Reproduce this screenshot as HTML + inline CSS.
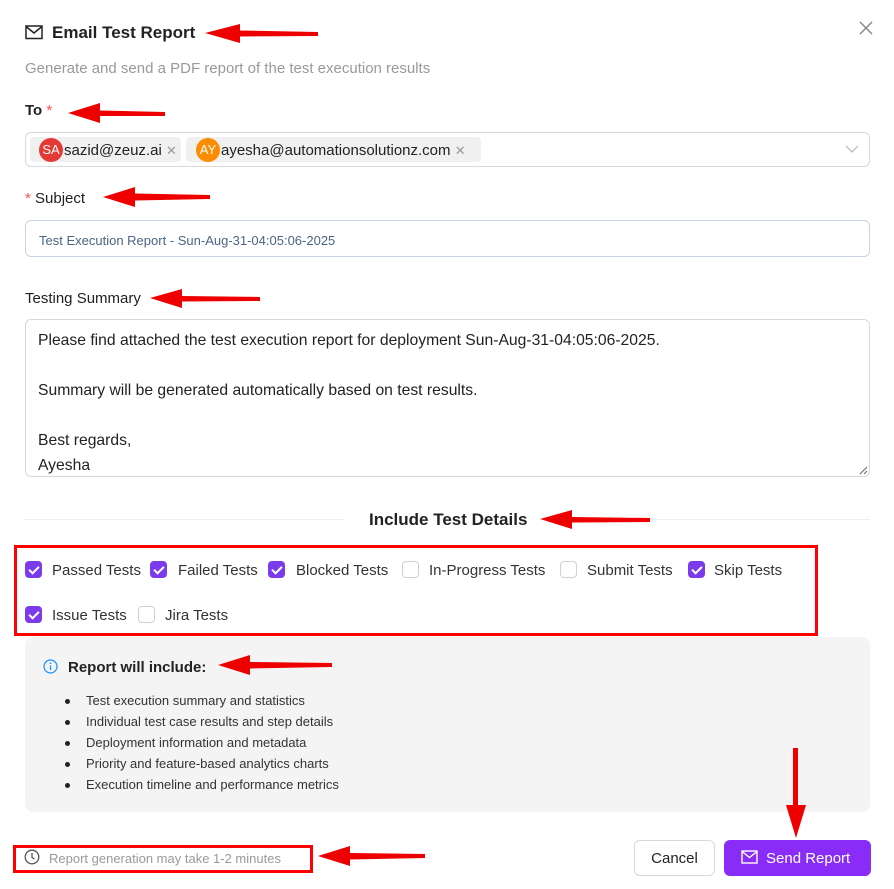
<!DOCTYPE html>
<html><head><meta charset="utf-8"><style>
*{box-sizing:border-box;margin:0;padding:0}
body{width:894px;height:889px;background:#fff;font-family:"Liberation Sans",sans-serif;color:#222;position:relative;overflow:hidden}
.a{position:absolute;white-space:nowrap}
.cb{position:absolute;width:17px;height:17px;border-radius:4px;border:1px solid #d0d0d0;background:#fff}
.cb.on{background:#7c3aed;border-color:#7c3aed}
.cb.on:after{content:"";position:absolute;left:5px;top:2px;width:4px;height:8px;border:solid #fff;border-width:0 2px 2px 0;transform:rotate(45deg)}
.lbl{position:absolute;font-size:15px;color:#333}
.li{position:absolute;left:68px;font-size:13px;color:#333}
.li:before{content:"";position:absolute;left:-3px;top:6px;width:5px;height:5px;border-radius:50%;background:#222}
.li span{margin-left:18px}
</style></head><body>
<svg class="a" style="left:25px;top:25px" width="18" height="15" viewBox="0 0 18 15"><rect x="1" y="1" width="16" height="12.5" fill="none" stroke="#222" stroke-width="1.5"/><path d="M1 1.5 L9 8 L17 1.5" fill="none" stroke="#222" stroke-width="1.5"/></svg>
<div class="a" style="left:52px;top:23px;font-size:17px;font-weight:bold;color:#222">Email Test Report</div>
<svg class="a" style="left:858px;top:20px" width="16" height="16"><path d="M2 2L14 14M14 2L2 14" stroke="#888" stroke-width="1.5"/></svg>
<div class="a" style="left:25px;top:60px;font-size:15px;color:#999">Generate and send a PDF report of the test execution results</div>
<div class="a" style="left:25px;top:102px;font-size:15px;font-weight:bold">To <span style="color:#ff4d4f;font-weight:normal">*</span></div>
<div class="a" style="left:25px;top:132px;width:845px;height:35px;border:1px solid #d9d9d9;border-radius:6px"></div>
<div class="a" style="left:30px;top:137px;width:151px;height:25px;background:#f0f0f0;border-radius:4px"></div>
<div class="a" style="left:39px;top:138px;width:24px;height:24px;border-radius:50%;background:#e53935;color:#fff;font-size:13px;line-height:24px;text-align:center">SA</div>
<div class="a" style="left:64px;top:142px;font-size:15px;color:#222">sazid@zeuz.ai <span style="color:#999;font-size:13px">✕</span></div>
<div class="a" style="left:186px;top:137px;width:295px;height:25px;background:#f0f0f0;border-radius:4px"></div>
<div class="a" style="left:196px;top:138px;width:24px;height:24px;border-radius:50%;background:#fb8c00;color:#fff;font-size:13px;line-height:24px;text-align:center">AY</div>
<div class="a" style="left:221px;top:142px;font-size:15px;color:#222">ayesha@automationsolutionz.com <span style="color:#999;font-size:13px">✕</span></div>
<svg class="a" style="left:845px;top:144px" width="14" height="10"><path d="M1 2L7 8L13 2" fill="none" stroke="#bbb" stroke-width="1.3"/></svg>
<div class="a" style="left:25px;top:190px;font-size:15px"><span style="color:#ff4d4f">*</span> Subject</div>
<div class="a" style="left:25px;top:220px;width:845px;height:37px;border:1px solid #c8d3e0;border-radius:6px"></div>
<div class="a" style="left:39px;top:233px;font-size:13px;color:#4a6585">Test Execution Report - Sun-Aug-31-04:05:06-2025</div>
<div class="a" style="left:25px;top:290px;font-size:15px">Testing Summary</div>
<div class="a" style="left:25px;top:319px;width:845px;height:158px;border:1px solid #d9d9d9;border-radius:6px"></div>
<div class="a" style="left:38px;top:328px;font-size:15.7px;line-height:25px;color:#222">Please find attached the test execution report for deployment Sun-Aug-31-04:05:06-2025.<br><br>Summary will be generated automatically based on test results.<br><br>Best regards,<br>Ayesha</div>
<svg class="a" style="left:858px;top:465px" width="10" height="10"><path d="M9 2L2 9M9 6L6 9" stroke="#666"/></svg>
<div class="a" style="left:25px;top:519px;width:320px;height:1px;background:#eee"></div>
<div class="a" style="left:550px;top:519px;width:320px;height:1px;background:#eee"></div>
<div class="a" style="left:369px;top:510px;font-size:17px;font-weight:bold">Include Test Details</div>
<div class="a" style="left:14px;top:545px;width:804px;height:91px;border:3px solid #f00"></div>
<div class="cb on" style="left:25px;top:561px"></div><div class="lbl" style="left:52px;top:562px">Passed Tests</div>
<div class="cb on" style="left:150px;top:561px"></div><div class="lbl" style="left:178px;top:562px">Failed Tests</div>
<div class="cb on" style="left:268px;top:561px"></div><div class="lbl" style="left:296px;top:562px">Blocked Tests</div>
<div class="cb" style="left:402px;top:561px"></div><div class="lbl" style="left:429px;top:562px">In-Progress Tests</div>
<div class="cb" style="left:560px;top:561px"></div><div class="lbl" style="left:587px;top:562px">Submit Tests</div>
<div class="cb on" style="left:688px;top:561px"></div><div class="lbl" style="left:714px;top:562px">Skip Tests</div>
<div class="cb on" style="left:25px;top:606px"></div><div class="lbl" style="left:52px;top:607px">Issue Tests</div>
<div class="cb" style="left:138px;top:606px"></div><div class="lbl" style="left:165px;top:607px">Jira Tests</div>
<div class="a" style="left:25px;top:637px;width:845px;height:175px;background:#f4f4f4;border-radius:8px"></div>
<svg class="a" style="left:43px;top:659px" width="15" height="15"><circle cx="7.5" cy="7.5" r="6.5" fill="none" stroke="#1890ff" stroke-width="1.2"/><path d="M7.5 6.5V11" stroke="#1890ff" stroke-width="1.3"/><circle cx="7.5" cy="4.3" r=".9" fill="#1890ff"/></svg>
<div class="a" style="left:68px;top:659px;font-size:15px;font-weight:bold">Report will include:</div>
<div class="li" style="top:693px"><span>Test execution summary and statistics</span></div>
<div class="li" style="top:714px"><span>Individual test case results and step details</span></div>
<div class="li" style="top:735px"><span>Deployment information and metadata</span></div>
<div class="li" style="top:756px"><span>Priority and feature-based analytics charts</span></div>
<div class="li" style="top:777px"><span>Execution timeline and performance metrics</span></div>
<div class="a" style="left:13px;top:845px;width:300px;height:28px;border:3px solid #f00"></div>
<svg class="a" style="left:24px;top:849px" width="16" height="16"><circle cx="8" cy="8" r="6.8" fill="none" stroke="#555" stroke-width="1.3"/><path d="M8 4V8.5L10.5 10" fill="none" stroke="#555" stroke-width="1.3"/></svg>
<div class="a" style="left:49px;top:851px;font-size:13px;color:#999">Report generation may take 1-2 minutes</div>
<div class="a" style="left:634px;top:840px;width:81px;height:36px;border:1px solid #d9d9d9;border-radius:6px;font-size:15px;line-height:35px;text-align:center">Cancel</div>
<div class="a" style="left:724px;top:840px;width:147px;height:36px;background:#8a2cf8;border-radius:6px;color:#fff;font-size:15px;line-height:37px;padding-left:42px">Send Report</div>
<svg class="a" style="left:741px;top:850px" width="17" height="14"><rect x="1" y="1" width="15" height="12" fill="none" stroke="#fff" stroke-width="1.4"/><path d="M1 1.5L8.5 7.5L16 1.5" fill="none" stroke="#fff" stroke-width="1.4"/></svg>
<svg class="a" style="left:0;top:0" width="894" height="889">
<g fill="#e00" stroke="none">
<path d="M318 32L240 30.5L240 24L205 33L240 43L240 36.5L318 36Z"/>
<path d="M165 112L100 110.5L100 103L68 113L100 123L100 116L165 116Z"/>
<path d="M210 195L135 193.5L135 187L103 197L135 207L135 200.5L210 199Z"/>
<path d="M260 297L182 296L182 289L150 298L182 308L182 301.5L260 301Z"/>
<path d="M650 518L572 517L572 510L540 519L572 529L572 522.5L650 522Z"/>
<path d="M332 663L250 662L250 655L218 665L250 675L250 668.5L332 667Z"/>
<path d="M425 854L350 853L350 846L318 856L350 866L350 859.5L425 858Z"/>
<path d="M793 748L798 748L798 805L806 805L796 838L786 805L793 805Z"/>
</g></svg>
</body></html>
